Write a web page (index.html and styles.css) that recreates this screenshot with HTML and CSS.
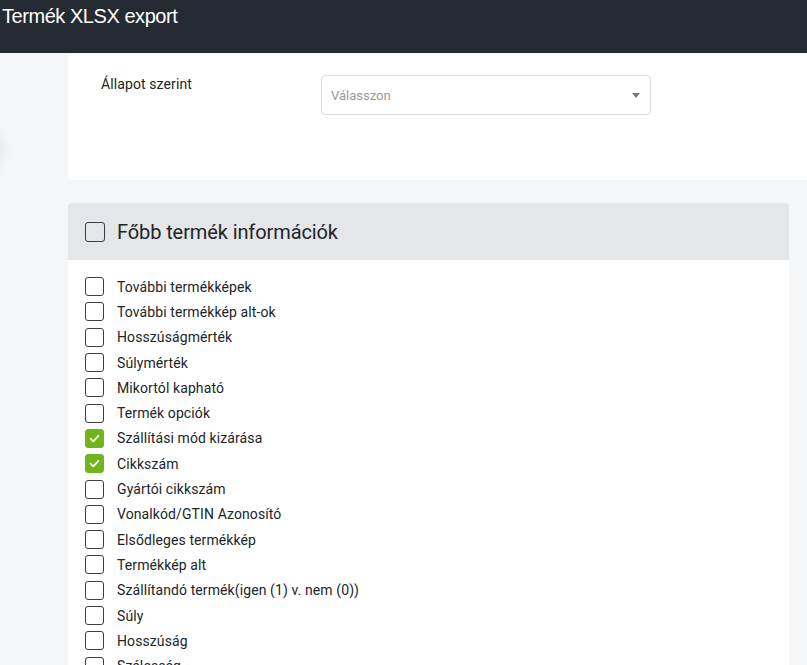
FILE: index.html
```html
<!DOCTYPE html>
<html lang="hu">
<head>
<meta charset="utf-8">
<title>Termék XLSX export</title>
<link rel="stylesheet" href="styles.css">
</head>
<body>
<header class="topbar">
  <h1 class="title">Termék XLSX export</h1>
</header>
<div class="fab-shadow"></div>
<main class="content">
  <section class="card filter-card">
    <div class="filter-row">
      <label class="filter-label">Állapot szerint</label>
      <div class="select">
        <span class="select-placeholder">Válasszon</span>
        <span class="select-arrow"></span>
      </div>
    </div>
  </section>

  <section class="card group-card">
    <div class="group-head">
      <span class="cb cb-lg"></span>
      <span class="group-title">Főbb termék információk</span>
    </div>
    <ul class="field-list">
      <li class="field"><span class="cb"></span><span class="field-label">További termékképek</span></li>
      <li class="field"><span class="cb"></span><span class="field-label">További termékkép alt-ok</span></li>
      <li class="field"><span class="cb"></span><span class="field-label">Hosszúságmérték</span></li>
      <li class="field"><span class="cb"></span><span class="field-label">Súlymérték</span></li>
      <li class="field"><span class="cb"></span><span class="field-label">Mikortól kapható</span></li>
      <li class="field"><span class="cb"></span><span class="field-label">Termék opciók</span></li>
      <li class="field"><span class="cb cb-on"><svg viewBox="0 0 19 19" width="19" height="19"><path d="M5.5 9.6 L8.3 12.3 L13.4 6.9" fill="none" stroke="#fff" stroke-width="1.7" stroke-linecap="round" stroke-linejoin="round"/></svg></span><span class="field-label">Szállítási mód kizárása</span></li>
      <li class="field"><span class="cb cb-on"><svg viewBox="0 0 19 19" width="19" height="19"><path d="M5.5 9.6 L8.3 12.3 L13.4 6.9" fill="none" stroke="#fff" stroke-width="1.7" stroke-linecap="round" stroke-linejoin="round"/></svg></span><span class="field-label">Cikkszám</span></li>
      <li class="field"><span class="cb"></span><span class="field-label">Gyártói cikkszám</span></li>
      <li class="field"><span class="cb"></span><span class="field-label">Vonalkód/GTIN Azonosító</span></li>
      <li class="field"><span class="cb"></span><span class="field-label">Elsődleges termékkép</span></li>
      <li class="field"><span class="cb"></span><span class="field-label">Termékkép alt</span></li>
      <li class="field"><span class="cb"></span><span class="field-label">Szállítandó termék(igen (1) v. nem (0))</span></li>
      <li class="field"><span class="cb"></span><span class="field-label">Súly</span></li>
      <li class="field"><span class="cb"></span><span class="field-label">Hosszúság</span></li>
      <li class="field"><span class="cb"></span><span class="field-label">Szélesség</span></li>
    </ul>
  </section>
</main>
</body>
</html>
```
FILE: styles.css
```css
* { box-sizing: border-box; }
html, body { height: 100%; }
body {
  margin: 0;
  background: #f5f6f8;
  font-family: Roboto, "Liberation Sans", Arial, sans-serif;
  color: #212529;
  overflow: hidden;
  position: relative;
}
.topbar {
  height: 53px;
  background: #262a32;
  padding: 4px 0 0 2px;
}
.title {
  margin: 0;
  font-family: "Liberation Sans", Arial, sans-serif;
  font-weight: 400;
  font-size: 20px;
  letter-spacing: -0.45px;
  line-height: 24px;
  color: #ffffff;
}
.fab-shadow {
  position: absolute;
  left: -44px;
  top: 128px;
  width: 44px;
  height: 44px;
  border-radius: 50%;
  box-shadow: 0 0 14px rgba(0, 0, 0, 0.12);
}
.content {
  padding-left: 68px;
  display: flex;
  flex-direction: column;
  gap: 23px;
}
.card {
  background: #fff;
  border-radius: 4px;
}
.filter-card {
  width: 780px;
  height: 126px;
  margin-top: 1px;
  padding: 21px 0 0 33px;
  border-top-left-radius: 0;
  border-top-right-radius: 0;
}
.filter-row {
  display: grid;
  grid-template-columns: 220px 330px;
  align-items: start;
}
.filter-label {
  font-size: 14px;
  line-height: 18px;
  letter-spacing: 0.1px;
}
.select {
  height: 40px;
  border: 1px solid #dcdcdc;
  border-radius: 4px;
  display: flex;
  align-items: center;
  justify-content: space-between;
  padding: 0 10px 0 9px;
}
.select-placeholder {
  font-size: 13px;
  color: #9a9a9a;
}
.select-arrow {
  width: 0;
  height: 0;
  border-left: 4px solid transparent;
  border-right: 4px solid transparent;
  border-top: 5px solid #777;
}
.group-card {
  width: 721px;
  height: 480px;
  overflow: hidden;
}
.group-head {
  height: 57px;
  background: #e5e6e9;
  display: flex;
  align-items: center;
  padding-left: 17px;
  gap: 12px;
}
.group-title {
  font-size: 20px;
  line-height: 24px;
  letter-spacing: -0.1px;
}
.cb {
  width: 19px;
  height: 19px;
  border: 1px solid #3a3f45;
  border-radius: 3px;
  background: #fff;
  flex: none;
  display: block;
}
.cb-lg {
  width: 20px;
  height: 20px;
  background: transparent;
}
.cb-on {
  background: #70b51c;
  border-color: #70b51c;
  position: relative;
}
.cb-on svg {
  position: absolute;
  left: -1px;
  top: -1px;
}
.field-list {
  list-style: none;
  margin: 0;
  padding: 14px 0 20px 17px;
  display: flex;
  flex-direction: column;
}
.field {
  height: 25.3px;
  display: flex;
  align-items: center;
  gap: 13px;
}
.field-label {
  font-size: 14px;
  line-height: 18px;
  letter-spacing: 0.1px;
}
```
